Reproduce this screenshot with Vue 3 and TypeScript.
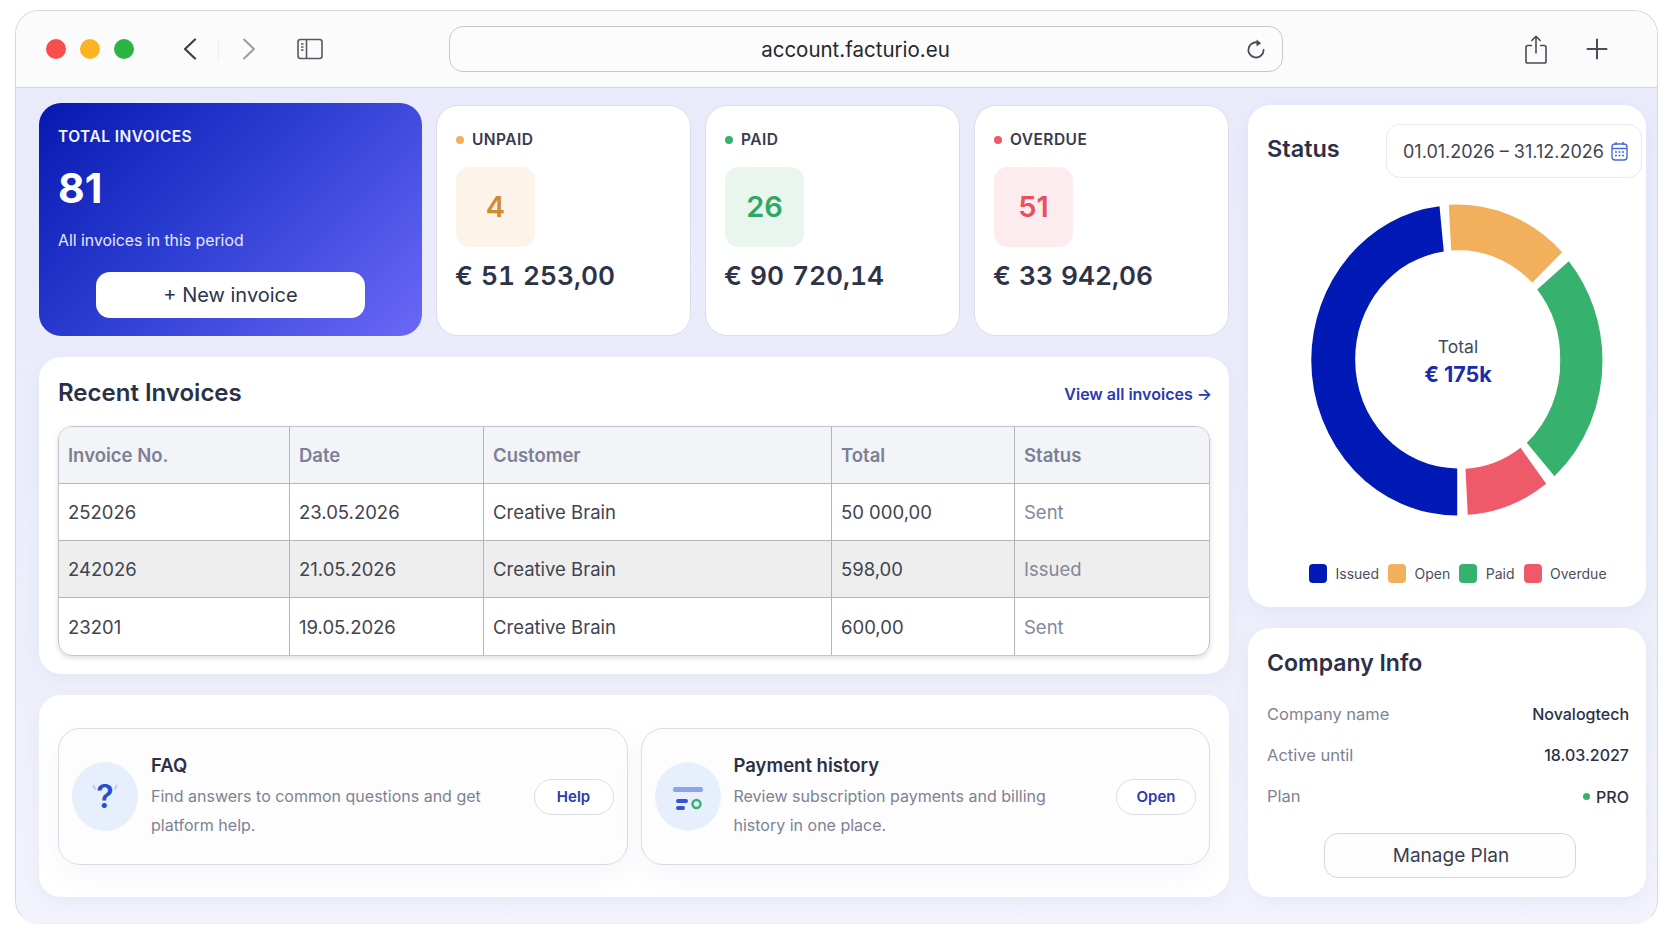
<script setup lang="ts">
interface StatCard {
  label: string
  count: number
  amount: string
  kind: 'unpaid' | 'paid' | 'overdue'
}

interface Invoice {
  no: string
  date: string
  customer: string
  total: string
  status: string
}

const stats: StatCard[] = [
  { label: 'UNPAID', count: 4, amount: '€ 51 253,00', kind: 'unpaid' },
  { label: 'PAID', count: 26, amount: '€ 90 720,14', kind: 'paid' },
  { label: 'OVERDUE', count: 51, amount: '€ 33 942,06', kind: 'overdue' },
]

const invoices: Invoice[] = [
  { no: '252026', date: '23.05.2026', customer: 'Creative Brain', total: '50 000,00', status: 'Sent' },
  { no: '242026', date: '21.05.2026', customer: 'Creative Brain', total: '598,00', status: 'Issued' },
  { no: '23201', date: '19.05.2026', customer: 'Creative Brain', total: '600,00', status: 'Sent' },
]

// Donut is slightly taller than wide, same as the reference
const segments = [
  { color: '#0119b5', d: 'M146.2 311.5A145.5 155.5 0 0 1 .25 156A145.5 155.5 0 0 1 128.5 2.2L132.8 47.5A102.5 108.5 0 0 0 44.2 156A102.5 108.5 0 0 0 146.2 264.5Z' },
  { color: '#f3b05c', d: 'M137.8 .8A145.5 155.5 0 0 1 251.2 48.2L221.2 78.8A102.5 108.5 0 0 0 140.2 46.5Z' },
  { color: '#36b16e', d: 'M257.8 57.2A145.5 155.5 0 0 1 291.5 156A145.5 155.5 0 0 1 243.5 272.2L215.8 238.8A102.5 108.5 0 0 0 249.2 156A102.5 108.5 0 0 0 226.2 85.5Z' },
  { color: '#ef5a6a', d: 'M235.2 279.8A145.5 155.5 0 0 1 156.8 310.8L154.5 264.8A102.5 108.5 0 0 0 209.5 243.8Z' },
]

const legend = [
  { label: 'Issued', color: '#0119b5' },
  { label: 'Open', color: '#f3b05c' },
  { label: 'Paid', color: '#36b16e' },
  { label: 'Overdue', color: '#ef5a6a' },
]
</script>

<template>
  <div class="page">
    <div class="window">
      <header class="toolbar">
        <div class="lights">
          <span class="light red"></span>
          <span class="light yellow"></span>
          <span class="light green"></span>
        </div>
        <svg class="nav-back" width="14" height="22" viewBox="0 0 14 22" fill="none" stroke="#3d4048" stroke-width="2.2" stroke-linecap="round" stroke-linejoin="round">
          <path d="M12 1.5 2 11l10 9.5" />
        </svg>
        <span class="nav-sep"></span>
        <svg class="nav-forward" width="14" height="22" viewBox="0 0 14 22" fill="none" stroke="#9a9ca3" stroke-width="2" stroke-linecap="round" stroke-linejoin="round">
          <path d="M2 1.5 12 11 2 20.5" />
        </svg>
        <svg class="sidebar-icon" width="26" height="22" viewBox="0 0 26 22" fill="none" stroke="#55585f" stroke-width="1.6">
          <rect x="1" y="1.5" width="24" height="19" rx="2.5" />
          <path d="M9.5 1.5v19" />
          <path d="M4 6h2.5M4 9h2.5M4 12h2.5" stroke-width="1.4" />
        </svg>
        <div class="url-bar">
          <span class="url-text">account.facturio.eu</span>
          <svg class="reload" width="20" height="22" viewBox="0 0 20 22" fill="none" stroke="#4a4d55" stroke-width="1.8" stroke-linecap="round">
            <path d="M13.6 5.2A7.6 7.6 0 1 0 17.6 12" />
            <path d="M10.5 1.5 15 5.2l-4.5 3.4Z" fill="#4a4d55" stroke="none" />
          </svg>
        </div>
        <svg class="share" width="22" height="29" viewBox="0 0 22 29" fill="none" stroke="#4a4d55" stroke-width="1.6" stroke-linecap="round" stroke-linejoin="round">
          <path d="M6.5 10.5H2.8A1.8 1.8 0 0 0 1 12.300v13.900A1.800 1.800 0 0 0 2.800 28h16.400a1.800 1.800 0 0 0 1.800-1.800V12.300a1.800 1.800 0 0 0-1.800-1.800H15.500" />
          <path d="M11 18V1.500M6.800 5.500 11 1.300l4.200 4.200" />
        </svg>
        <svg class="plus" width="22" height="22" viewBox="0 0 22 22" fill="none" stroke="#4a4d55" stroke-width="2" stroke-linecap="round">
          <path d="M11 1.500v19M1.500 11h19" />
        </svg>
      </header>

      <main class="content">
        <div class="left-col">
          <section class="stats">
            <div class="total-card">
              <div class="total-label">TOTAL INVOICES</div>
              <div class="total-count">81</div>
              <div class="total-note">All invoices in this period</div>
              <button class="new-btn">+ New invoice</button>
            </div>
            <div v-for="stat in stats" :key="stat.label" class="stat-card" :class="stat.kind">
              <div class="stat-label"><span class="dot"></span>{{ stat.label }}</div>
              <div class="stat-tile">{{ stat.count }}</div>
              <div class="stat-amount">{{ stat.amount }}</div>
            </div>
          </section>

          <section class="card recent">
            <div class="recent-head">
              <h2>Recent Invoices</h2>
              <a class="view-all">View all invoices →</a>
            </div>
            <div class="table-wrap">
              <table>
                <colgroup>
                  <col style="width: 231px" />
                  <col style="width: 194px" />
                  <col style="width: 348px" />
                  <col style="width: 183px" />
                  <col />
                </colgroup>
                <thead>
                  <tr>
                    <th>Invoice No.</th>
                    <th>Date</th>
                    <th>Customer</th>
                    <th>Total</th>
                    <th>Status</th>
                  </tr>
                </thead>
                <tbody>
                  <tr v-for="inv in invoices" :key="inv.no">
                    <td>{{ inv.no }}</td>
                    <td>{{ inv.date }}</td>
                    <td>{{ inv.customer }}</td>
                    <td>{{ inv.total }}</td>
                    <td class="status-cell">{{ inv.status }}</td>
                  </tr>
                </tbody>
              </table>
            </div>
          </section>

          <section class="card links">
            <div class="link-box">
              <div class="link-icon">
                <svg width="40" height="40" viewBox="0 0 40 40" fill="none">
                  <text x="20" y="31" text-anchor="middle" class="q-mark">?</text>
                  <path d="M8.500 8.500 10 12M31.500 8.500 30 12" stroke="#a9bdf0" stroke-width="1.400" stroke-linecap="round" />
                </svg>
              </div>
              <div class="link-text">
                <h3>FAQ</h3>
                <p>Find answers to common questions and get platform help.</p>
              </div>
              <button class="pill">Help</button>
            </div>
            <div class="link-box">
              <div class="link-icon">
                <svg width="40" height="40" viewBox="0 0 40 40">
                  <rect x="5" y="10" width="30" height="5" rx="2" fill="#8ba4ee" />
                  <rect x="8" y="22" width="12" height="4" rx="2" fill="#3553d6" />
                  <rect x="8" y="29" width="9" height="4" rx="2" fill="#3553d6" />
                  <circle cx="28.500" cy="27" r="4" fill="none" stroke="#36b16e" stroke-width="2.400" />
                </svg>
              </div>
              <div class="link-text">
                <h3>Payment history</h3>
                <p>Review subscription payments and billing history in one place.</p>
              </div>
              <button class="pill">Open</button>
            </div>
          </section>
        </div>

        <div class="right-col">
          <section class="card status-card">
            <div class="status-head">
              <h2>Status</h2>
              <div class="date-box">
                <span>01.01.2026 – 31.12.2026</span>
                <svg width="17" height="20" viewBox="0 0 17 20" fill="none" stroke="#4a68d8" stroke-width="1.400">
                  <rect x="1" y="3" width="15" height="16" rx="3" />
                  <path d="M1 7.500h15M5 1v3M12 1v3" />
                  <path d="M4 11h2M7.500 11h2M11 11h2M4 14.500h2M7.500 14.500h2M11 14.500h2" stroke-width="1.300" />
                </svg>
              </div>
            </div>
            <div class="donut">
              <svg width="292" height="312" viewBox="0 0 292 312">
                <path v-for="seg in segments" :key="seg.color" :d="seg.d" :fill="seg.color" />
              </svg>
              <div class="donut-center">
                <span class="donut-label">Total</span>
                <span class="donut-value">€ 175k</span>
              </div>
            </div>
            <div class="legend">
              <div v-for="item in legend" :key="item.label" class="legend-item">
                <span class="swatch" :style="{ background: item.color }"></span>{{ item.label }}
              </div>
            </div>
          </section>

          <section class="card company">
            <h2>Company Info</h2>
            <div class="info-row"><span>Company name</span><strong>Novalogtech</strong></div>
            <div class="info-row"><span>Active until</span><strong>18.03.2027</strong></div>
            <div class="info-row"><span>Plan</span><strong class="plan"><i></i>PRO</strong></div>
            <button class="manage-btn">Manage Plan</button>
          </section>
        </div>
      </main>
    </div>
  </div>
</template>

<style>
html,
body {
  margin: 0;
  background: #fff;
}
</style>

<style scoped>
.page {
  width: 1672px;
  height: 941px;
  box-sizing: border-box;
  padding: 10px 14px 17px 15px;
  font-family: Inter, 'Liberation Sans', sans-serif;
  color: #2d3348;
  overflow: hidden;
}

.window {
  height: 100%;
  display: flex;
  flex-direction: column;
  border: 1px solid #d6d7db;
  border-bottom-color: #eeeef4;
  border-radius: 24px;
  overflow: hidden;
  box-sizing: border-box;
}

.toolbar {
  height: 77px;
  flex: none;
  display: flex;
  align-items: center;
  background: #fbfbfb;
  border-bottom: 1px solid #d5d6da;
  box-sizing: border-box;
  padding-left: 30px;
}

.lights {
  display: flex;
  gap: 14px;
}

.light {
  width: 20px;
  height: 20px;
  border-radius: 50%;
}

.light.red { background: #f84d4a; }
.light.yellow { background: #fbb420; }
.light.green { background: #2bb542; }

.nav-back { margin-left: 49px; }

.nav-sep {
  width: 1px;
  height: 22px;
  background: #eeeeef;
  margin-left: 21px;
}

.nav-forward { margin-left: 23px; }
.sidebar-icon { margin-left: 41px; }

.url-bar {
  width: 834px;
  height: 46px;
  margin-left: 126px;
  position: relative;
  display: flex;
  align-items: center;
  justify-content: center;
  padding-right: 21px;
  background: #fcfcfc;
  border: 1px solid #c6c7cb;
  border-radius: 14px;
  box-sizing: border-box;
}

.url-text {
  font-size: 20.500px;
  color: #26282e;
}

.reload {
  position: absolute;
  right: 16px;
  top: 11px;
}

.share { margin-left: 242px; }
.plus { margin-left: 39px; }

.content {
  flex: 1;
  min-height: 0;
  display: grid;
  grid-template-columns: 1190px 398px;
  column-gap: 19px;
  padding: 15px 0 0 23px;
  background: linear-gradient(180deg, #e9eafa 0%, #eceefa 60%, #f2f3fc 100%);
  align-content: start;
}

.left-col,
.right-col {
  display: flex;
  flex-direction: column;
  gap: 21px;
}

.right-col { padding-top: 2px; }

.stats {
  display: grid;
  grid-template-columns: 383px 255px 255px 255px;
  gap: 14px;
  height: 233px;
}

.card {
  background: #fff;
  border-radius: 22px;
  box-sizing: border-box;
  box-shadow: 0 6px 18px rgba(90, 95, 170, 0.06);
}

h2 {
  margin: 0;
  font-size: 24px;
  font-weight: 600;
  color: #2b3046;
  line-height: 30px;
}

.total-card {
  border-radius: 22px;
  background: linear-gradient(135deg, #0718b0 0%, #2a3bd0 42%, #6a68f8 100%);
  color: #fff;
  padding: 24px 19px 0;
  box-sizing: border-box;
  display: flex;
  flex-direction: column;
}

.total-label {
  font-size: 15.500px;
  font-weight: 600;
  line-height: 20px;
  letter-spacing: 0.45px;
  color: #f3f4ff;
}

.total-count {
  font-size: 41px;
  font-weight: 700;
  line-height: 50px;
  margin-top: 16px;
}

.total-note {
  font-size: 15.800px;
  line-height: 22px;
  margin-top: 17px;
  color: #e7e9ff;
}

.new-btn {
  width: 269px;
  height: 46px;
  margin: 20px 0 0 38px;
  border: none;
  border-radius: 14px;
  background: #fff;
  font-family: inherit;
  font-size: 20px;
  color: #2d3348;
}

.stat-card {
  margin-top: 2px;
  background: #fff;
  border: 1px solid #dcdde8;
  border-radius: 22px;
  box-sizing: border-box;
  padding: 23px 19px 0;
}

.stat-label {
  display: flex;
  align-items: center;
  gap: 8px;
  font-size: 15.500px;
  font-weight: 600;
  line-height: 22px;
  letter-spacing: 0.45px;
  color: #363b50;
}

.dot {
  width: 8px;
  height: 8px;
  border-radius: 50%;
}

.stat-tile {
  width: 79px;
  height: 80px;
  margin-top: 16px;
  padding-bottom: 2px;
  box-sizing: border-box;
  border-radius: 14px;
  display: flex;
  align-items: center;
  justify-content: center;
  font-size: 29px;
  font-weight: 600;
}

.stat-amount {
  margin-top: 12px;
  margin-left: -1px;
  font-size: 26.300px;
  font-weight: 600;
  line-height: 34px;
  word-spacing: 1px;
  font-variant-numeric: tabular-nums;
  color: #2d3348;
}

.unpaid .dot { background: #f3b05c; }
.unpaid .stat-tile { background: #fdf3e8; color: #d28a31; }
.paid .dot { background: #36b16e; }
.paid .stat-tile { background: #e8f6ee; color: #2fa866; }
.overdue .dot { background: #ef5a6a; }
.overdue .stat-tile { background: #fdecee; color: #e8505f; }

.recent {
  height: 317px;
  padding: 21px 19px 0;
}

.recent-head {
  display: flex;
  justify-content: space-between;
  align-items: center;
  height: 30px;
  margin-bottom: 18px;
}

.view-all {
  font-size: 16px;
  font-weight: 600;
  color: #2a3ab0;
  margin: 2px -2px 0 0;
}

.table-wrap {
  border: 1px solid #c4c5ca;
  border-radius: 14px;
  overflow: hidden;
  box-shadow: 0 2px 5px rgba(60, 60, 80, 0.18);
}

table {
  width: 100%;
  table-layout: fixed;
  border-collapse: separate;
  border-spacing: 0;
}

th,
td {
  height: 57px;
  padding: 0 9px;
  box-sizing: border-box;
  text-align: left;
  font-size: 18.500px;
  border-right: 1px solid #b4b5ba;
  border-bottom: 1px solid #b4b5ba;
}

th:last-child,
td:last-child {
  border-right: none;
}

tbody tr:last-child td {
  border-bottom: none;
}

th {
  background: #f3f4f7;
  font-weight: 600;
  color: #7b8094;
}

td { color: #3f4450; }
tbody tr:nth-child(2) td { background: #eeeeee; }
td.status-cell { color: #84889a; }

.links {
  height: 202px;
  padding: 33px 19px 0;
  display: grid;
  grid-template-columns: 1fr 1fr;
  column-gap: 13px;
  align-items: start;
}

.link-box {
  height: 137px;
  box-sizing: border-box;
  border: 1px solid #dcdde2;
  border-radius: 22px;
  background: #fdfdfe;
  display: flex;
  align-items: center;
  padding: 0 13px 0 13px;
  box-shadow: 0 10px 24px rgba(90, 95, 170, 0.06);
}

.link-icon {
  width: 66px;
  height: 69px;
  flex: none;
  border-radius: 50%;
  background: #e8effc;
  display: flex;
  align-items: center;
  justify-content: center;
}

.q-mark {
  font-family: Inter, 'Liberation Sans', sans-serif;
  font-size: 32px;
  font-weight: 600;
  fill: #2c4dd0;
}

.link-text {
  flex: 1;
  margin-left: 13px;
}

h3 {
  margin: 0;
  font-size: 18.500px;
  font-weight: 600;
  line-height: 24px;
  color: #2b3046;
}

.link-text p {
  margin: 5px 0 0;
  width: 345px;
  font-size: 16px;
  line-height: 29px;
  color: #7d8294;
}

.pill {
  width: 80px;
  height: 36px;
  flex: none;
  border: 1px solid #dcdde2;
  border-radius: 18px;
  background: #fff;
  font-family: inherit;
  font-size: 15px;
  font-weight: 600;
  color: #2a3ab0;
}

.status-card {
  height: 502px;
  padding: 19px 4px 0 19px;
}

.status-head {
  display: flex;
  justify-content: space-between;
  align-items: flex-start;
}

.status-head h2 {
  margin-top: 10px;
  font-size: 23.500px;
}

.date-box {
  width: 256px;
  height: 54px;
  box-sizing: border-box;
  border: 1px solid #e7e8f0;
  border-radius: 14px;
  display: flex;
  align-items: center;
  gap: 7px;
  padding-left: 16px;
  font-size: 18px;
  color: #3f4450;
  white-space: nowrap;
}

.donut {
  position: relative;
  width: 292px;
  height: 312px;
  margin: 26px 0 0 44px;
}

.donut svg { display: block; }

.donut-center {
  position: absolute;
  left: 2px;
  right: 0;
  top: 131px;
  display: flex;
  flex-direction: column;
  align-items: center;
  gap: 2px;
}

.donut-label {
  font-size: 17.500px;
  line-height: 24px;
  color: #444958;
}

.donut-value {
  font-size: 21.500px;
  font-weight: 700;
  line-height: 26px;
  color: #1a2cae;
}

.legend {
  display: flex;
  gap: 9px;
  margin: 48px 0 0 42px;
}

.legend-item {
  display: flex;
  align-items: center;
  gap: 8.500px;
  font-size: 14px;
  color: #4a4f60;
}

.swatch {
  width: 18px;
  height: 19px;
  border-radius: 4px;
}

.company {
  height: 269px;
  padding: 20px 17px 0 19px;
}

.company h2 {
  margin-bottom: 15px;
  font-size: 23px;
}

.info-row {
  display: flex;
  justify-content: space-between;
  align-items: center;
  height: 41px;
  font-size: 16.500px;
  color: #7e8394;
}

.info-row strong {
  font-size: 16px;
  font-weight: 500;
  color: #2b3046;
}

.plan {
  display: flex;
  align-items: center;
  gap: 6px;
  padding-top: 2px;
}

.plan i {
  width: 7px;
  height: 7px;
  border-radius: 50%;
  background: #36b16e;
}

.manage-btn {
  display: block;
  width: 252px;
  height: 45px;
  margin: 17px 0 0 57px;
  padding-left: 8px;
  border: 1px solid #d5d6dc;
  border-radius: 14px;
  background: #fdfdfe;
  font-family: inherit;
  font-size: 19px;
  color: #3a3f4e;
}
</style>
